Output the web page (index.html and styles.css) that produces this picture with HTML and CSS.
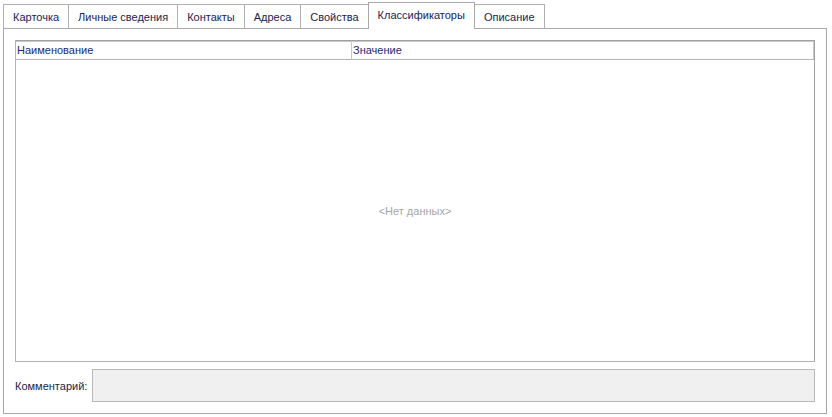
FILE: index.html
```html
<!DOCTYPE html>
<html lang="ru">
<head>
    <meta charset="UTF-8">
    <title>Классификаторы</title>
    <link rel="stylesheet" href="styles.css">
</head>
<body>
    <div class="page">
        <div class="tabs">
            <div class="tab">Карточка</div>
            <div class="tab">Личные сведения</div>
            <div class="tab">Контакты</div>
            <div class="tab">Адреса</div>
            <div class="tab">Свойства</div>
            <div class="tab active">Классификаторы</div>
            <div class="tab">Описание</div>
        </div>
        <div class="panel">
            <div class="grid">
                <div class="grid-head">
                    <div class="col col-name">Наименование</div>
                    <div class="col col-value">Значение</div>
                </div>
                <div class="grid-body">
                    <span class="empty">&lt;Нет данных&gt;</span>
                </div>
            </div>
            <div class="comment-row">
                <label class="comment-label" for="comment">Комментарий:</label>
                <div class="comment-box" id="comment"></div>
            </div>
        </div>
    </div>
</body>
</html>
```

FILE: styles.css
```css
* {
    box-sizing: border-box;
}
body {
    margin: 0;
    background: #fff;
    font-family: 'Liberation Sans', Arial, sans-serif;
    font-size: 11px;
    color: #1e2a5a;
}
.page {
    padding: 2px 5px 3px 3px;
}
.tabs {
    display: flex;
    align-items: flex-end;
    height: 26px;
}
.tab {
    height: 24px;
    line-height: 24px;
    padding: 0 9px;
    border: 1px solid #b0b0b0;
    border-bottom: none;
    background: #fff;
    white-space: nowrap;
    color: #1a2350;
}
.tab + .tab {
    margin-left: -1px;
}
.tab.active {
    position: relative;
    z-index: 1;
    height: 27px;
    line-height: 25px;
    margin-bottom: -1px;
    border-color: #a8a8a8;
}
.panel {
    border: 1px solid #a8a8a8;
    height: 386px;
    padding: 11px 11px 0 11px;
    display: flex;
    flex-direction: column;
}
.grid {
    flex: 1;
    display: flex;
    flex-direction: column;
    border: 1px solid #b4b4b4;
    border-top-color: #a0a0a0;
    border-right-color: #a0a0a0;
}
.grid-head {
    display: flex;
    height: 19px;
    line-height: 17px;
    border-top: 1px solid #c8c8c8;
    border-right: 1px solid #c8c8c8;
    border-bottom: 1px solid #b4b4b4;
}
.col {
    padding-left: 1px;
    color: #1c2b6a;
}
.col-name {
    width: 336px;
    border-right: 1px solid #c8c8c8;
}
.grid-body {
    flex: 1;
    display: flex;
    align-items: center;
    justify-content: center;
}
.empty {
    color: #a6a6a6;
}
.comment-row {
    display: flex;
    align-items: center;
    gap: 6px;
    margin: 7px 0 11px;
}
.comment-label {
    width: 71px;
    color: #1a1f4a;
    white-space: nowrap;
}
.comment-box {
    flex: 1;
    height: 33px;
    background: #f0f0f0;
    border: 1px solid #b8b8b8;
}
```
